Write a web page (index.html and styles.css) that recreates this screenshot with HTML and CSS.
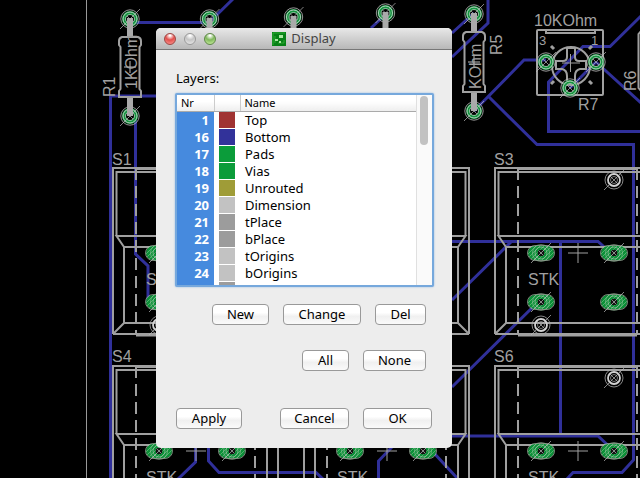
FILE: index.html
```html
<!DOCTYPE html>
<html lang="en">
<head>
<meta charset="utf-8">
<title>Display</title>
<link rel="stylesheet" href="styles.css">
</head>
<body>
<svg class="board" viewBox="0 0 640 478" preserveAspectRatio="xMinYMin slice" aria-hidden="true">
  <defs>
    <pattern id="hatch" width="4" height="4" patternUnits="userSpaceOnUse">
      <rect width="4" height="4" fill="#0b9038"/>
      <path d="M-1 5L5 -1" stroke="#63b878" stroke-width=".8"/>
    </pattern>
    <g id="via">
      <circle r="6" fill="none" stroke="#14963f" stroke-width="4"/>
      <circle r="4.500" fill="none" stroke="#ccc" stroke-width=".7"/>
      <circle r="7" fill="none" stroke="#ddd" stroke-width=".8"/>
      <circle r="9.200" fill="none" stroke="#bbb" stroke-width=".8"/>
      <path d="M-10 10L10 -10M-3 -3L3 3" stroke="#bbb" stroke-width=".7"/>
    </g>
    <g id="pad">
      <rect x="-13" y="-7" width="26" height="14" rx="7" fill="url(#hatch)"/>
      <rect x="-13.500" y="-7.500" width="27" height="15" rx="7.500" fill="none" stroke="#a8bfa9" stroke-width=".7"/>
      <circle r="8.500" fill="none" stroke="#9abf9f" stroke-width=".6"/>
      <circle r="6" fill="none" stroke="#b8c8b8" stroke-width=".6"/>
      <circle r="3.300" fill="#111"/>
      <path d="M-10 10L10 -10M-2.500 -2.500L2.500 2.500" stroke="#bbb" stroke-width=".7"/>
    </g>
    <g id="hole">
      <circle r="6" fill="none" stroke="#d2d2d2" stroke-width="1.800"/>
      <circle r="9" fill="none" stroke="#aaa" stroke-width=".8"/>
      <circle r="3.500" fill="none" stroke="#aaa" stroke-width=".7"/>
      <path d="M-10 10L10 -10M-4 -4L4 4" stroke="#bbb" stroke-width=".7"/>
    </g>
    <g id="switch">
      <g class="silk">
        <path d="M0 166V0H165V166M3.500 68V4H161.500V68M0 166L11 155V79L3.500 68H161.500L154 79V155L165 166M11 79H154M11 155H154M0 166H165"/>
        <path d="M23 .5H142M23 167H142" stroke-width="3"/>
        <path d="M23 0V166M142 0V166" stroke-dasharray="12 6"/>
        <path d="M73 85H93M83 75V95" stroke-width="1"/>
      </g>
      <use href="#pad" x="46" y="85"/><use href="#pad" x="119" y="85"/>
      <use href="#pad" x="46" y="134"/><use href="#pad" x="119" y="134"/>
      <use href="#hole" x="119" y="12"/><use href="#hole" x="46" y="157"/>
      <text class="label" x="33" y="117">STK</text>
    </g>
    <g id="resistor">
      <use href="#via"/><use href="#via" y="97"/>
      <path d="M0 -1V18M0 79V97" stroke="#aaa" stroke-width="6"/>
      <path class="silk" d="M-8 18H8Q11 19 11 22V26L9.500 28V70L11 72V78H-11V72L-9.500 70V28L-11 26V22Q-11 19 -8 18Z"/>
      <path d="M-6 48H6M0 42V54" stroke="#bbb"/>
    </g>
  </defs>

  <path d="M86.500 0V478" stroke="#999"/>
  <g class="trace">
    <path d="M130 22.500H209L233 -1M156 96H110.500V478M135.500 116V254L148 266V302"/>
    <path d="M371 28L385 15M452 33L474 13M488 0V23L452 57"/>
    <path d="M474 111L524 60H546M488 96L537 144.500H633.500V460L622 472.500H573L567 479"/>
    <path d="M548.500 132V82L583 46.500H610L641 16M547 131.500H640M596 62L641 103M570 88L596 62"/>
    <path d="M452 241.500H598L612 254M560.500 241V434M512 241L452 300M541 299L452 387M452 436H598L614 451"/>
    <path d="M195.500 446V462L178 479M208.500 446V461L219 472.500H316L323 479M378.500 479V461L392 447M433 452L458 479"/>
  </g>

  <use href="#resistor" x="130" y="19"/>
  <use href="#resistor" x="474" y="14"/>
  <use href="#via" x="209.500" y="19"/><use href="#via" x="293.500" y="17"/><use href="#via" x="385.500" y="13"/>
  <g stroke="#aaa" stroke-width="6"><path d="M209.500 18V30M293.500 16V30M385.500 12V30"/></g>

  <use href="#switch" x="113" y="168"/><use href="#switch" x="304" y="168"/><use href="#switch" x="495" y="168"/>
  <use href="#switch" x="113" y="366"/><use href="#switch" x="304" y="366"/><use href="#switch" x="495" y="366"/>

  <g class="silk">
    <rect x="537" y="30" width="66" height="65" rx="1"/>
    <path d="M546 30V33H595V30" />
    <circle cx="571" cy="66" r="19"/>
    <path d="M567 48H575V57Q575 61 579 61H586V69H580Q575 70 575 76V84H567V76Q567 70 562 69H556V61H563Q567 61 567 57Z"/>
    <path d="M551 46L554 49M592 46L589 49M551 84L554 81M589 81L592 84" stroke-width="3"/>
    <path d="M562 63H580M570.500 54V72" stroke-width="1"/>
    <path d="M641 31L638.500 34V88L641 91"/>
  </g>
  <use href="#via" x="546" y="62"/><use href="#via" x="596" y="62"/><use href="#via" x="570" y="88"/>

  <g class="label">
    <text x="534" y="26">10KOhm</text>
    <text x="578" y="110">R7</text>
    <text class="pin" x="539" y="45">3</text>
    <text class="pin" x="591" y="45">1</text>
    <text x="112" y="165">S1</text>
    <text x="494" y="165">S3</text>
    <text x="112" y="362">S4</text>
    <text x="494" y="362">S6</text>
    <text transform="translate(115 97) rotate(-90)">R1</text>
    <text transform="translate(502 55) rotate(-90)">R5</text>
    <text transform="translate(636 91) rotate(-90)">R6</text>
    <text transform="translate(137 89) rotate(-90)">1KOhm</text>
    <text transform="translate(481 89) rotate(-90)">KOhm</text>
  </g>
</svg>

<main class="dialog">
  <header class="titlebar">
    <div class="lights">
      <button class="light close" aria-label="Close"></button>
      <button class="light minimize" aria-label="Minimize"></button>
      <button class="light maximize" aria-label="Zoom"></button>
    </div>
    <h1 class="title">
      <svg width="14" height="14" viewBox="0 0 14 14" aria-hidden="true">
        <rect width="14" height="14" fill="#078116"/>
        <path d="M1 13V1H13M3 4V11M6 11H12V8" fill="none" stroke="#2faa32"/>
        <path d="M7 3H11V6H7ZM3 7H6V9H3ZM7 9H9V11H7Z" fill="#a9e8a0"/>
      </svg>
      Display
    </h1>
  </header>
  <div class="content">
    <h2 class="caption" id="layers">Layers:</h2>
    <div class="list" tabindex="0">
      <table class="layers" aria-labelledby="layers">
        <thead><tr><th class="nr">Nr</th><th class="color"></th><th>Name</th></tr></thead>
        <tbody>
          <tr><td>1</td><td><i class="swatch red"></i></td><td>Top</td></tr>
          <tr><td>16</td><td><i class="swatch blue"></i></td><td>Bottom</td></tr>
          <tr><td>17</td><td><i class="swatch green"></i></td><td>Pads</td></tr>
          <tr><td>18</td><td><i class="swatch green"></i></td><td>Vias</td></tr>
          <tr><td>19</td><td><i class="swatch olive"></i></td><td>Unrouted</td></tr>
          <tr><td>20</td><td><i class="swatch light-gray"></i></td><td>Dimension</td></tr>
          <tr><td>21</td><td><i class="swatch gray"></i></td><td>tPlace</td></tr>
          <tr><td>22</td><td><i class="swatch gray"></i></td><td>bPlace</td></tr>
          <tr><td>23</td><td><i class="swatch light-gray"></i></td><td>tOrigins</td></tr>
          <tr><td>24</td><td><i class="swatch light-gray"></i></td><td>bOrigins</td></tr>
          <tr><td></td><td><i class="swatch gray"></i></td><td></td></tr>
        </tbody>
      </table>
      <div class="scrollbar"><div class="thumb"></div></div>
    </div>
    <div class="row inset">
      <button class="btn short">New</button>
      <button class="btn long">Change</button>
      <button class="btn tiny">Del</button>
    </div>
    <div class="row inset">
      <button class="btn small">All</button>
      <button class="btn wide">None</button>
    </div>
    <div class="row footer">
      <button class="btn apply">Apply</button>
      <button class="btn large">Cancel</button>
      <button class="btn large">OK</button>
    </div>
  </div>
</main>
</body>
</html>
```
FILE: styles.css
```css
* { box-sizing: border-box; }

body {
  margin: 0;
  min-height: 100vh;
  overflow: hidden;
  background: #000;
  color: #000;
  font: 13px/17px "Noto Sans", "Open Sans", sans-serif;
}

.board {
  position: absolute;
  inset: 0;
  width: 100%;
  height: 100%;
}
.trace path { fill: none; stroke: #30309a; stroke-width: 3; }
.silk { fill: none; stroke: #a0a0a0; stroke-width: 2; }
.label { fill: #a0a0a0; font: 16px "Liberation Sans", sans-serif; }
.label .pin { font-size: 13px; }

.dialog {
  position: absolute;
  left: 156px;
  top: 28px;
  width: 296px;
  border-radius: 5px;
  background: #ededed;
  overflow: hidden;
}

.titlebar {
  display: grid;
  grid-template-columns: 1fr auto 1fr;
  align-items: center;
  height: 22px;
  padding: 0 8px;
  border-bottom: 1px solid #777;
  background: linear-gradient(#e8e8e8, #b8b8b8);
}
.lights { display: flex; gap: 8px; }
.light {
  width: 12px;
  height: 12px;
  padding: 0;
  border: 1px solid #888;
  border-radius: 50%;
}
.close { border-color: #9c4643; background: radial-gradient(circle at 50% 15%, #fff 5%, #e2504c 45%, #ff9c96); }
.minimize { border-color: #999; background: radial-gradient(circle at 50% 15%, #fff 5%, #c4c4c4 45%, #eee); }
.maximize { border-color: #5e8647; background: radial-gradient(circle at 50% 15%, #fff 5%, #80b85c 45%, #d2f5a8); }
.title {
  display: flex;
  align-items: center;
  gap: 5px;
  margin: 0;
  color: #444;
  font-size: 13px;
  font-weight: 400;
}

.content { padding: 20px 20px 19px; }
.caption { margin: 0 0 6px; font-size: 13px; font-weight: 400; }

.list {
  display: flex;
  height: 194px;
  margin: 0 -2px 0 -1px;
  border: 2px solid #76a8dc;
  border-radius: 2px;
  background: #fff;
  box-shadow: 0 0 2px #8db8e4;
  overflow: hidden;
  outline: 0;
}
.layers {
  flex: 1;
  align-self: flex-start;
  border-collapse: collapse;
  table-layout: fixed;
}
.layers th {
  height: 16px;
  padding: 0 4px;
  border-bottom: 1px solid #aaa;
  background: linear-gradient(#fff 40%, #eee);
  font-size: 11px;
  font-weight: 400;
  line-height: 15px;
  text-align: left;
}
.layers .nr { width: 37px; }
.layers .color { width: 26px; border-right: 1px solid #ccc; border-left: 1px solid #ccc; }
.layers td { height: 17px; padding: 0 5px; line-height: 17px; }
.layers td:first-child {
  background: #468ade;
  color: #fff;
  font-weight: 700;
  text-align: right;
}
.swatch { display: block; width: 16px; height: 16px; }
.red { background: #a03332; }
.blue { background: #32329a; }
.green { background: #0b9c3a; }
.olive { background: #9f9c37; }
.gray { background: #9c9c9c; }
.light-gray { background: #c2c2c2; }

.scrollbar {
  width: 16px;
  padding: 1px 4px 1px 3px;
  border-left: 1px solid #e0e0e0;
  background: #fafafa;
}
.thumb { height: 49px; border-radius: 4px; background: #c2c2c2; }

.row {
  display: flex;
  justify-content: flex-end;
  gap: 14px;
  margin-top: 25px;
}
.list + .row { margin-top: 17px; }
.inset { padding-right: 6px; }
.footer { margin-top: 37px; }
.btn {
  height: 21px;
  padding: 0;
  border: 1px solid #999;
  border-radius: 4px;
  background: linear-gradient(#fff 40%, #f0f0f0 60%, #fafafa);
  color: #000;
  font: inherit;
  line-height: 17px;
}
.tiny { width: 51px; }
.short { width: 57px; }
.long { width: 78px; }
.small { width: 47px; }
.wide { width: 63px; }
.large { width: 69px; }
.apply { width: 66px; margin-right: auto; }
.content .footer { margin-right: 0; }
```
